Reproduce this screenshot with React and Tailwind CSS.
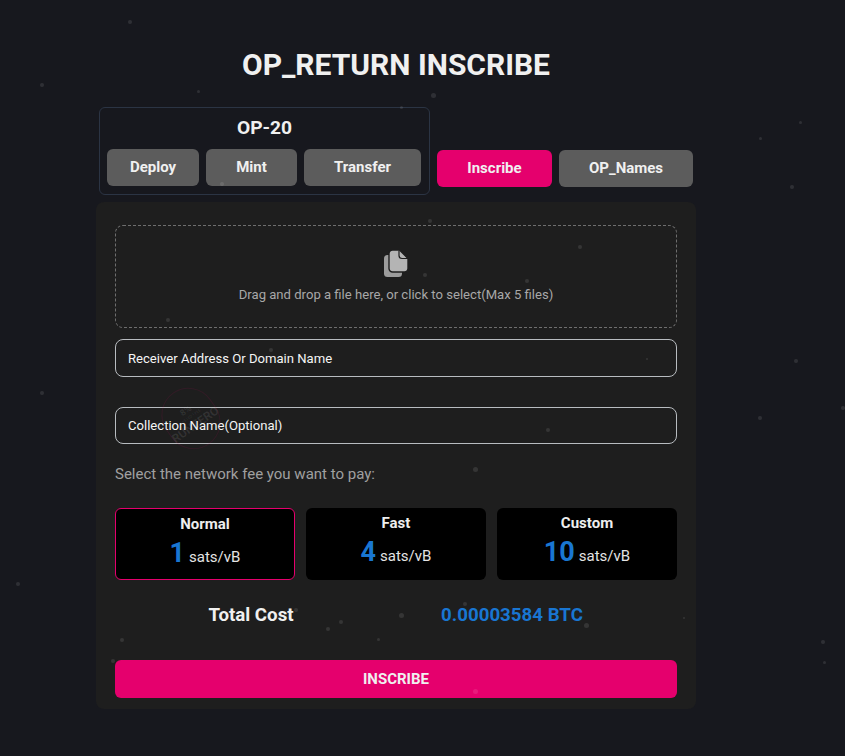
const dots = [
  [130, 22, 4], [42, 85, 4], [198, 91, 3], [433, 95, 5], [401, 107, 3], [800, 122, 3], [760, 138, 3],
  [792, 187, 4], [222, 184, 4], [430, 221, 4], [580, 247, 4], [425, 275, 4], [527, 281, 4],
  [168, 320, 4], [271, 350, 4], [796, 361, 4], [647, 359, 2], [42, 393, 4], [843, 408, 4], [760, 418, 4],
  [548, 430, 4], [475, 469, 5], [18, 584, 4], [296, 610, 4], [401, 615, 5], [465, 604, 4], [341, 622, 4],
  [328, 629, 4], [586, 625, 5], [122, 640, 4], [378, 639, 3], [823, 642, 4], [824, 662, 3], [113, 661, 4],
  [475, 691, 5], [684, 618, 2],
];

function TabButton({ children, active, className }) {
  return (
    <button
      className={`h-[37px] rounded-md text-[15px] font-bold text-[#f0f0f0] ${active ? "bg-[#e5006d]" : "bg-[#5c5c5c]"} ${className}`}
    >
      {children}
    </button>
  );
}

function Field({ label, className }) {
  return (
    <div className={`flex items-center rounded-lg border border-[#b8bcc0] px-3 text-[13.1px] font-normal text-[#f5f5f5] ${className}`}>
      {label}
    </div>
  );
}

function Fee({ name, value, selected }) {
  return (
    <div
      className={`flex h-[72px] flex-col items-center rounded-md bg-black pt-[6px] ${selected ? "border border-[#e5006d]" : ""}`}
    >
      <div className="text-[15px] leading-[18px] font-bold text-[#eeeeee]">{name}</div>
      <div className="mt-[5px] flex items-baseline gap-[4px]">
        <span className="text-[27px] leading-[30px] font-bold text-[#1976d2]">{value}</span>
        <span className="text-[15px] text-[#e4e4e4]">sats/vB</span>
      </div>
    </div>
  );
}

export default function App() {
  return (
    <div className="relative h-[756px] overflow-hidden bg-[#17181e] font-['Roboto',sans-serif]">
      <div className="ml-[96px] flex w-[600px] flex-col">
        <h1 className="pt-[46px] text-center text-[30px] leading-[38px] font-bold text-[#f0f0f0]">
          OP_RETURN INSCRIBE
        </h1>
        <div className="mt-[23px] ml-[3px] flex items-end gap-[7px]">
          <div className="flex h-[88px] w-[331px] flex-col rounded-md border border-[#2b3444] px-[7px]">
            <div className="pt-[7px] text-center text-[19.2px] leading-[26px] font-bold text-[#f0f0f0]">OP-20</div>
            <div className="mt-[8px] flex gap-[7px]">
              <TabButton className="w-[92px]">Deploy</TabButton>
              <TabButton className="w-[91px]">Mint</TabButton>
              <TabButton className="w-[117px]">Transfer</TabButton>
            </div>
          </div>
          <TabButton active className="mb-[8px] w-[115px]">Inscribe</TabButton>
          <TabButton className="mb-[8px] w-[134px]">OP_Names</TabButton>
        </div>
        <div className="mt-[7px] flex h-[507px] flex-col rounded-lg bg-[#1e1e1e] px-[19px] pt-[23px]">
          <div className="flex h-[103px] flex-col items-center rounded-lg border border-dashed border-[#6e6e6e] pt-[24px]">
            <svg width="24" height="27" viewBox="0 0 24 27" aria-hidden="true">
              <rect x="0" y="5" width="18" height="22" rx="3.5" fill="#9c9c9c" />
              <path
                d="M8.5 0 H15.5 L24 8.5 V18.5 A3.5 3.5 0 0 1 20.5 22 H8.5 A3.5 3.5 0 0 1 5 18.5 V3.5 A3.5 3.5 0 0 1 8.5 0 Z"
                fill="#b4b4b4"
                stroke="#1e1e1e"
                strokeWidth="1.4"
              />
              <path d="M15 0.5 V5.5 A3 3 0 0 0 18 8.5 H24" fill="none" stroke="#1e1e1e" strokeWidth="1.2" />
            </svg>
            <div className="mt-[9px] text-[13.1px] leading-[18px] text-[#a8a8a8]">
              Drag and drop a file here, or click to select(Max 5 files)
            </div>
          </div>
          <div className="mt-[11px] flex flex-col gap-[30px]">
            <Field label="Receiver Address Or Domain Name" className="h-[38px] pt-[2px]" />
            <Field label="Collection Name(Optional)" className="h-[37px]" />
          </div>
          <div className="mt-[19px] text-[15px] leading-[22px] text-[#a0a0a0]">
            Select the network fee you want to pay:
          </div>
          <div className="mt-[23px] grid grid-cols-3 gap-[11px]">
            <Fee name="Normal" value="1" selected />
            <Fee name="Fast" value="4" />
            <Fee name="Custom" value="10" />
          </div>
          <div className="mt-[23px] flex text-[18.7px] leading-[24px] font-bold">
            <div className="ml-[-1px] w-[274px] text-center text-[#f0f0f0]">Total Cost</div>
            <div className="ml-[-16px] w-[280px] text-center text-[#1976d2]">0.00003584 BTC</div>
          </div>
          <button className="mt-[33px] h-[38px] rounded-md bg-[#e5006d] text-[15px] font-bold text-[#f0f0f0]">
            INSCRIBE
          </button>
        </div>
      </div>
      <div className="pointer-events-none absolute top-[387px] left-[164px] flex h-[63px] w-[54px] -rotate-[35deg] flex-col items-center justify-center rounded-full border border-[#e5006d]/10 whitespace-nowrap text-white/[0.09]">
        <span className="text-[9px] leading-[10px] font-bold">8%</span>
        <span className="text-[4px] leading-[6px]">HASTED FEES</span>
        <span className="text-[12px] leading-[13px] font-bold">RUNZERO</span>
      </div>
      {dots.map(([x, y, size], i) => (
        <span
          key={i}
          className="pointer-events-none absolute rounded-full bg-white/10"
          style={{ left: x - size / 2, top: y - size / 2, width: size, height: size }}
        />
      ))}
    </div>
  );
}
